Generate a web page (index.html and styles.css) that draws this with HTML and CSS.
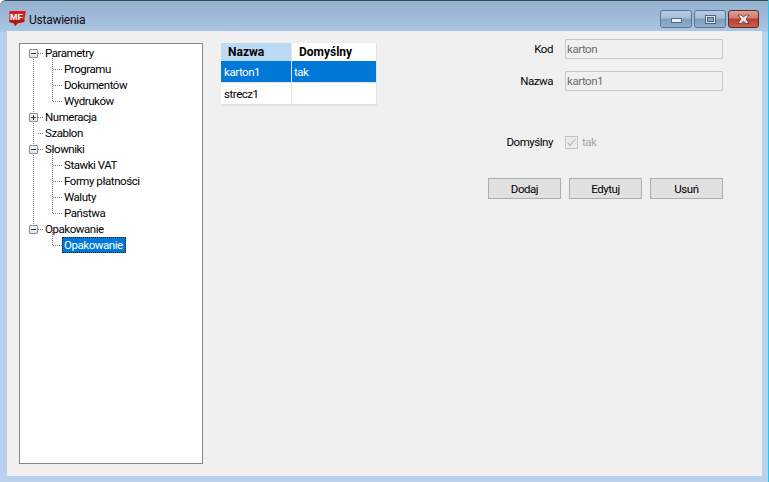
FILE: index.html
```html
<!DOCTYPE html>
<html lang="pl">
<head>
<meta charset="utf-8">
<title>Ustawienia</title>
<link rel="stylesheet" href="styles.css">
</head>
<body>
<div class="window">
  <header class="titlebar">
    <svg class="logo" width="17" height="17" viewBox="0 0 17 17"><path d="M1.500 1h14.500q1 0 .8 1l-1.800 9q-.2 1-1.500 1.200l-5 1-2.500 2.800-1.500-2.800-3.500-1q-.6-.2-.6-1V2q0-1 1.100-1z" fill="#d4201b"/><path d="M.4 9.500h15.800l-.5 1.800q-.2.8-1.500 1l-5.200.9-2.500 2.800-1.500-2.800-3.500-1q-1.100-.3-1.100-1z" fill="#a81512" opacity=".75"/><text x="1" y="10" class="logo-text">MF</text></svg>
    <span class="title">Ustawienia</span>
    <div class="controls">
      <button class="ctl"><span class="min-glyph"></span></button>
      <button class="ctl"><span class="max-glyph"></span></button>
      <button class="ctl close"><svg width="15" height="11" viewBox="0 0 15 11"><path d="M2 1h3l2.500 2L10 1h3L10 5l3 4.500h-3L7.500 7.300 5 9.500H2L5 5z" fill="#f4ecea" stroke="#6b2a24" stroke-width=".8"/></svg></button>
    </div>
  </header>
  <main class="content">
    <nav class="tree">
      <div class="node root"><span class="box minus"></span><span class="dash"></span><span class="label">Parametry</span></div>
      <div class="kids">
        <div class="node child"><span class="label">Programu</span></div>
        <div class="node child"><span class="label">Dokumentów</span></div>
        <div class="node child"><span class="label">Wydruków</span></div>
      </div>
      <div class="node root"><span class="box plus"></span><span class="dash"></span><span class="label">Numeracja</span></div>
      <div class="node root"><span class="box none"></span><span class="dash"></span><span class="label">Szablon</span></div>
      <div class="node root"><span class="box minus"></span><span class="dash"></span><span class="label">Słowniki</span></div>
      <div class="kids">
        <div class="node child"><span class="label">Stawki VAT</span></div>
        <div class="node child"><span class="label">Formy płatności</span></div>
        <div class="node child"><span class="label">Waluty</span></div>
        <div class="node child"><span class="label">Państwa</span></div>
      </div>
      <div class="node root"><span class="box minus"></span><span class="dash"></span><span class="label">Opakowanie</span></div>
      <div class="kids">
        <div class="node child"><span class="label selected">Opakowanie</span></div>
      </div>
    </nav>
    <table class="grid">
      <thead><tr><th class="sel-head">Nazwa</th><th>Domyślny</th></tr></thead>
      <tbody>
        <tr class="sel-row"><td>karton1</td><td>tak</td></tr>
        <tr><td>strecz1</td><td></td></tr>
      </tbody>
    </table>
    <form class="form">
      <div class="field"><label>Kod</label><input value="karton" disabled></div>
      <div class="field f-second"><label>Nazwa</label><input value="karton1" disabled></div>
      <div class="field f-check"><label>Domyślny</label>
        <span class="check"><svg width="11" height="11" viewBox="0 0 11 11"><path d="M1.500 5.500l2.500 3 5.500-7" fill="none" stroke="#b8b8b8" stroke-width="1.200"/></svg></span>
        <span class="check-text">tak</span></div>
      <div class="actions"><button type="button">Dodaj</button><button type="button">Edytuj</button><button type="button">Usuń</button></div>
    </form>
  </main>
</div>
</body>
</html>
```
FILE: styles.css
```css
* { box-sizing: border-box; }
html, body { margin: 0; height: 100%; overflow: hidden; background: #fff; }
body { font: 11.5px Roboto, "Liberation Sans", Arial, sans-serif; letter-spacing: -0.45px; color: #000; }
.window {
  width: 769px; height: 482px; display: flex; flex-direction: column;
  background: linear-gradient(#93b0cf 0, #abc6e2 31px, #b9d1ec 31px);
  border-top: 1px solid #3c4a58;
  border-right: 1px solid #27c8e8;
  border-top-left-radius: 6px;
  padding: 0 6px 6px 7px;
}
.titlebar { height: 30px; flex: none; display: flex; align-items: center; position: relative; }
.logo { margin: 5px 3px 0 2px; flex: none; }
.logo-text { font: 900 9px "Liberation Sans", Arial, sans-serif; fill: #fff; letter-spacing: 0; }
.title { font-size: 12px; letter-spacing: -0.25px; color: #0b0b14; margin-top: 8px; }
.controls { margin-left: auto; display: flex; gap: 2px; align-self: flex-start; margin-top: 9px; margin-right: 3px; }
.ctl {
  width: 32px; height: 18px; padding: 0; display: flex; align-items: center; justify-content: center;
  border: 1px solid #5f7390; border-radius: 3px;
  background: linear-gradient(#b7cde3 0, #a5bfd9 45%, #7f9cbc 50%, #92aecb 100%);
}
.ctl.close { width: 31px; border-color: #5b2a2a; background: linear-gradient(#e0a094 0, #d0796c 45%, #bb3a2c 50%, #c9604f 100%); }
.min-glyph { width: 11px; height: 5px; background: #e8edf3; border: 1px solid #566a85; margin-top: 3px; }
.max-glyph { width: 11px; height: 9px; background: #dfe7f0; border: 1px solid #4f6380; display: flex; align-items: center; justify-content: center; }
.max-glyph::after { content: ""; width: 5px; height: 3px; background: #8aa5c2; border: 1px solid #4f6380; }

.content { flex: 1; background: #f0f0f0; padding: 12px; display: flex; align-items: flex-start; min-height: 0; }

.tree { width: 184px; height: 421px; flex: none; background: #fff; border: 1px solid #828790; padding: 1px 0 0 9px; position: relative; }
.tree::before { content: ""; position: absolute; left: 13px; top: 10px; height: 176px; border-left: 1px dotted #777; }
.node { height: 16px; display: flex; align-items: center; position: relative; }
.box { width: 9px; height: 9px; flex: none; border: 1px solid #8b8f96; border-radius: 1px; position: relative; background: linear-gradient(#fff, #dfe3ea); z-index: 1; }
.box::before { content: ""; position: absolute; left: 1px; top: 3px; width: 5px; height: 1px; background: #333; }
.plus::after { content: ""; position: absolute; left: 3px; top: 1px; width: 1px; height: 5px; background: #333; }
.box.none { border: 0; background: none; }
.box.none::before { display: none; }
.dash { width: 5px; flex: none; border-top: 1px dotted #777; margin-right: 1px; }
.label { line-height: 16px; padding: 0 1px; white-space: nowrap; }
.kids { position: relative; margin-left: 9px; }
.kids::before { content: ""; position: absolute; left: 14px; top: -7px; bottom: 8px; border-left: 1px dotted #777; }
.child { padding-left: 34px; margin-left: -9px; }
.child::before { content: ""; position: absolute; left: 24px; top: 8px; width: 9px; border-top: 1px dotted #777; }
.selected { background: #0078d7; color: #fff; outline: 1px dotted #2e1c08; outline-offset: -1px; margin-left: -1px; padding: 0 2px; min-width: 64px; }

.grid { margin-left: 18px; width: 156px; border-collapse: separate; border-spacing: 0; table-layout: fixed; background: #fff; flex: none; border-right: 1px solid #e2e2e2; border-bottom: 2px solid #e2e2e2; }
.grid th { height: 18px; padding: 0 0 0 7px; font-size: 12px; font-weight: 700; letter-spacing: 0; background: #fff; text-align: left; }
.grid th:first-child, .grid td:first-child { width: 71px; border-right: 1px solid #e2e2e2; }
.grid .sel-head { background: #bcdaf3; }
.grid td { height: 22px; padding: 0 0 0 2px; border-bottom: 1px solid #e2e2e2; }
.grid td:first-child { padding-left: 3px; }
.grid tbody tr:last-child td { border-bottom: 0; height: 21px; }
.sel-row td { background: #0078d7; color: #fff; }

.form { flex: 1; min-width: 0; display: flex; flex-direction: column; align-items: flex-end; margin-top: -4px; padding-right: 27px; }
.field { display: flex; align-items: center; width: 338px; }
.field label { width: 168px; margin-right: 12px; text-align: right; flex: none; }
.field input { width: 158px; height: 20px; padding: 0 1px; font: inherit; letter-spacing: inherit; color: #6d6d6d; background: #f0f0f0; border: 1px solid #c9c9c9; flex: none; }
.f-second { margin-top: 12px; }
.f-check { margin-top: 44px; }
.check { width: 13px; height: 13px; border: 1px solid #c4c4c4; flex: none; background: #ececec; display: flex; }
.check-text { color: #a6a6a6; margin-left: 4px; }
.actions { display: flex; gap: 8px; margin-top: 29px; }
.actions button { width: 73px; height: 21px; padding: 0; font: inherit; letter-spacing: inherit; color: #000; background: #e1e1e1; border: 1px solid #adadad; }
```
